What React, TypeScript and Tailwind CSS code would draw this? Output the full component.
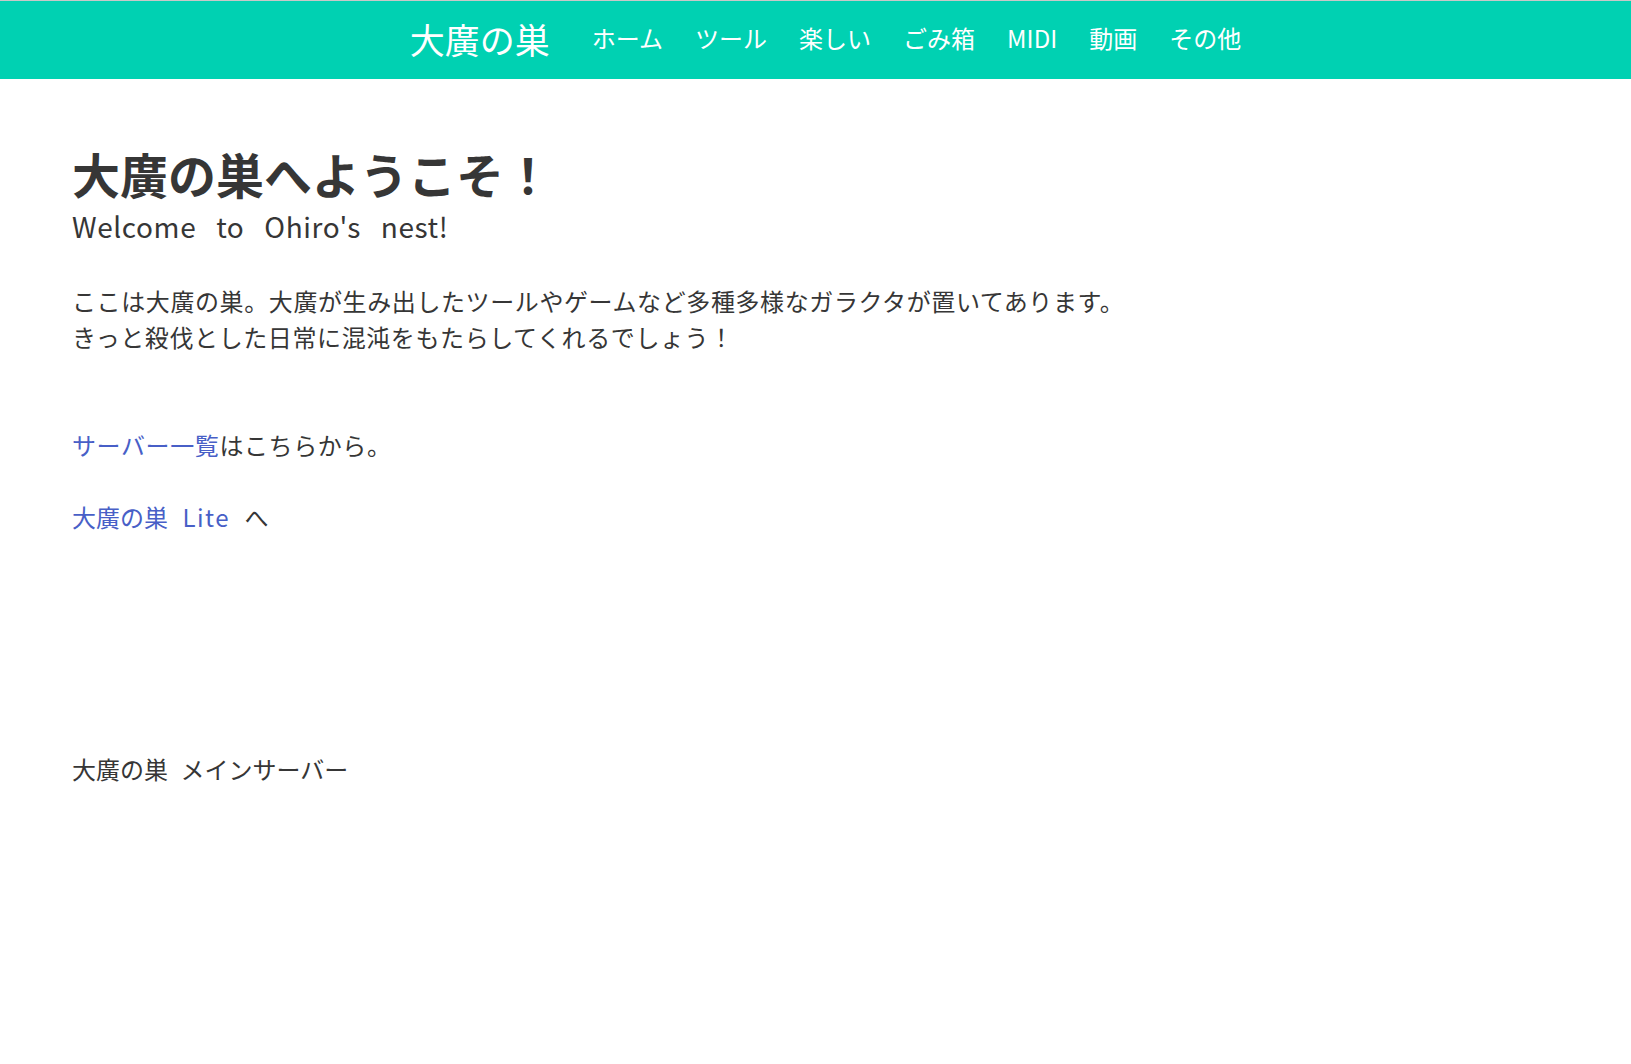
import React from 'react';

const navItems = ['ホーム', 'ツール', '楽しい', 'ごみ箱', 'MIDI', '動画', 'その他'];

export default function App() {
  return (
    <div className="min-h-screen bg-white text-[#363636]" style={{ fontFamily: '"Noto Sans CJK JP", "Noto Sans", sans-serif' }}>
      {/* Navbar */}
      <nav className="border-t border-[#c8c8c8] bg-[#00d1b2] text-white">
        <div className="flex h-[78px] items-center justify-center pb-1 pl-[36px]">
          <a href="#" className="mr-[26px] text-[35px] leading-none">大廣の巣</a>
          {navItems.map((item) => (
            <a key={item} href="#" className="px-4 text-[24px] leading-none">
              {item}
            </a>
          ))}
        </div>
      </nav>

      {/* Content */}
      <main className="px-[72px] pt-[66px]">
        <h1 className="text-[48px] font-bold leading-[1.2]">大廣の巣へようこそ！</h1>
        <h2 className="mt-[5px] text-[28px] leading-[37.5px] tracking-[0.6px] [word-spacing:13px]">Welcome to Ohiro's nest!</h2>

        <p className="mt-[38px] text-[24px] leading-[36px] tracking-[0.6px]">
          ここは大廣の巣。大廣が生み出したツールやゲームなど多種多様なガラクタが置いてあります。
          <br />
          きっと殺伐とした日常に混沌をもたらしてくれるでしょう！
        </p>

        <p className="mt-[72px] text-[24px] leading-[36px] tracking-[0.6px]">
          <a href="#" className="text-[#485fc7]">サーバー一覧</a>はこちらから。
        </p>

        <p className="mt-[36px] text-[24px] leading-[36px] [word-spacing:9px]">
          <a href="#" className="text-[#485fc7]">
            大廣の巣 <span className="tracking-[1.5px]">Lite</span>
          </a>{' '}
          へ
        </p>

        <p className="mt-[216px] text-[24px] leading-[36px] [word-spacing:7px]">大廣の巣 メインサーバー</p>
      </main>
    </div>
  );
}
